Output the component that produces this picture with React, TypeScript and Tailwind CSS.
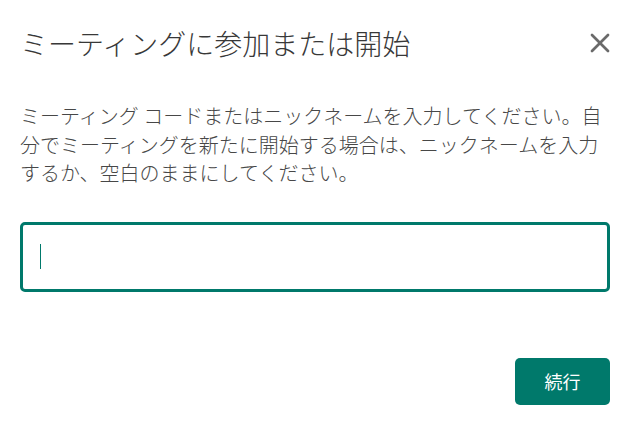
import { X } from "lucide-react";

export default function App() {
  return (
    <div
      className="w-[635px] h-[432px] bg-white overflow-hidden"
      style={{ fontFamily: '"Noto Sans CJK JP", "Noto Sans", sans-serif' }}
    >
      <div className="pl-5 pr-[25px] pt-[25px]">
        {/* Header */}
        <div className="flex items-center justify-between h-9">
          <h1 className="text-[28px] leading-9 text-[#383838] font-light">
            ミーティングに参加または開始
          </h1>
          <button className="w-8 h-8 -mr-[6px] flex items-center justify-center text-[#6a6a6a]">
            <X className="w-8 h-8" strokeWidth={2} />
          </button>
        </div>

        {/* Description */}
        <p className="mt-[41px] text-[20px] leading-[28.5px] text-[#474747] font-light">
          ミーティング コードまたはニックネームを入力してください。自分でミーティングを新たに開始する場合は、ニックネームを入力するか、空白のままにしてください。
        </p>

        {/* Input */}
        <div className="mt-[34px] h-[70px] border-[3px] border-[#00796b] rounded-[5px] flex items-center pl-[17px]">
          <span className="w-px h-[25px] bg-[#00796b]" />
        </div>

        {/* Footer */}
        <div className="mt-[66px] flex justify-end">
          <button className="w-[95px] h-[47px] rounded-[5px] bg-[#00796b] text-white text-[18px]">
            続行
          </button>
        </div>
      </div>
    </div>
  );
}
